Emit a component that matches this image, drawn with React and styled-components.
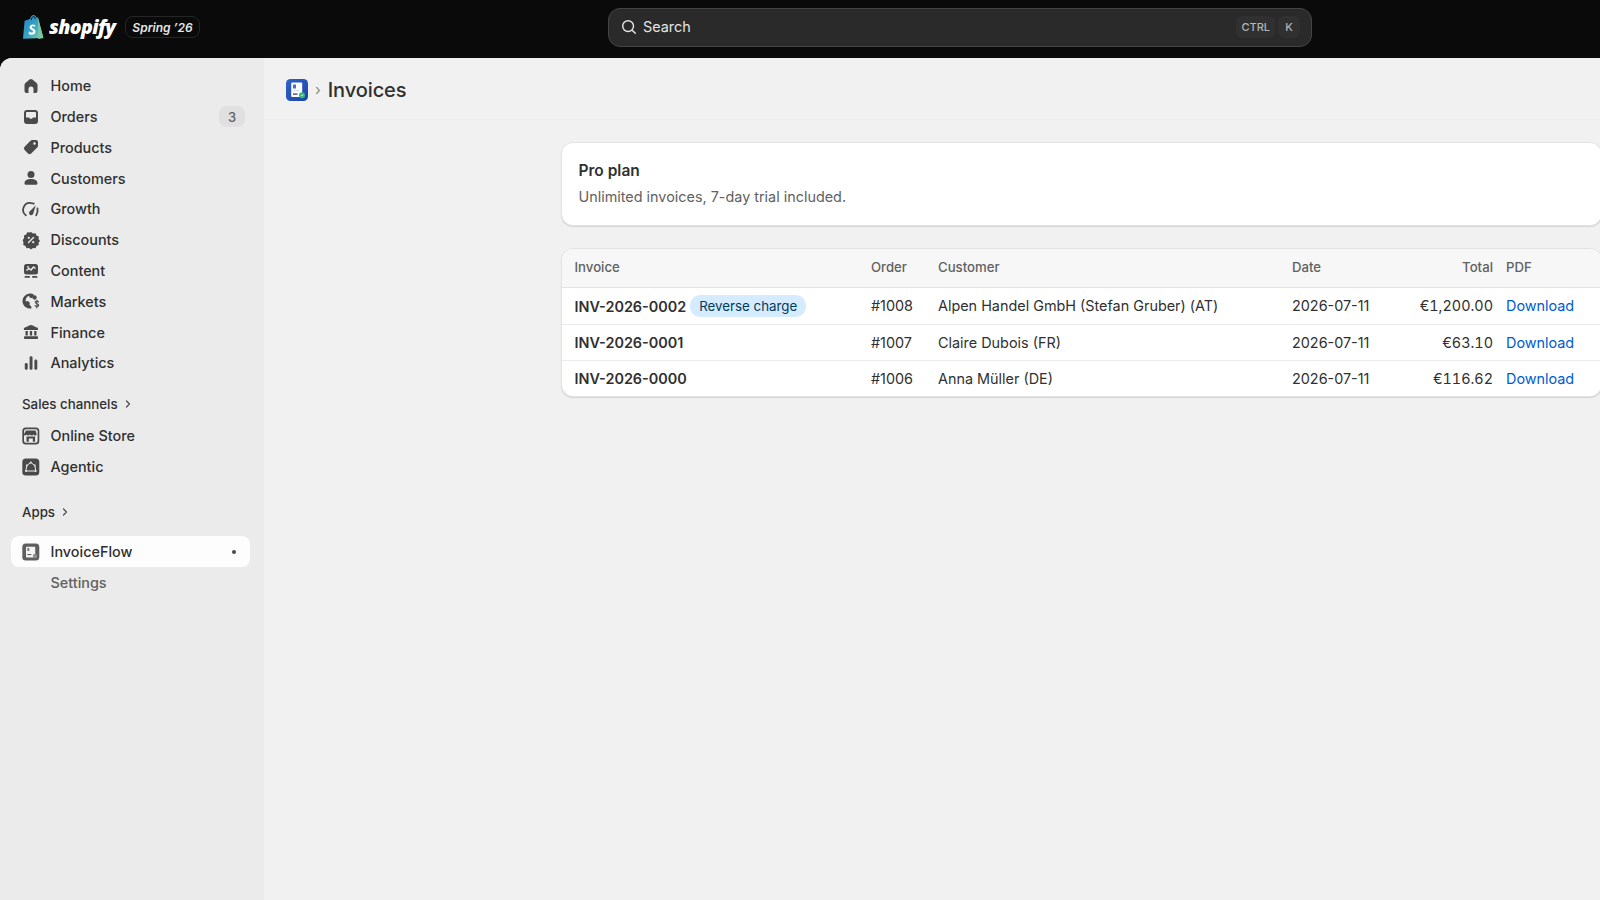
import React from "react";
import styled, { createGlobalStyle } from "styled-components";

const Global = createGlobalStyle`
  html, body {
    margin: 0;
    height: 100%;
    overflow: hidden;
    background: #0a0a0a;
  }
  * {
    box-sizing: border-box;
  }
  body {
    font-family: Inter, "Noto Sans", sans-serif;
    color: #303030;
  }
`;

const Page = styled.div`
  height: 100vh;
  display: flex;
  flex-direction: column;
  background: #0a0a0a;
`;

const TopBar = styled.header`
  height: 58px;
  flex: none;
  display: flex;
  align-items: center;
  padding: 0 0 4px 22px;
`;

const Brand = styled.div`
  width: 586px;
  display: flex;
  align-items: center;
`;

const Wordmark = styled.span`
  margin-left: 5px;
  color: #fff;
  font-family: "Open Sans", sans-serif;
  font-style: italic;
  font-weight: 800;
  font-size: 19.5px;
  letter-spacing: -0.6px;
  line-height: 26px;
`;

const Season = styled.span`
  margin-left: 10px;
  height: 22px;
  padding: 0 6px;
  display: inline-flex;
  align-items: center;
  border: 1px solid #262626;
  border-radius: 8px;
  color: #e6e6e6;
  font-size: 12px;
  font-style: italic;
  font-weight: 600;
`;

const SearchBox = styled.div`
  width: 704px;
  height: 39px;
  display: flex;
  align-items: center;
  padding: 0 11px 1px 11px;
  background: #2a2a2a;
  border: 1px solid #444;
  border-radius: 12px;
  color: #e3e3e3;
  font-size: 14.4px;
`;

const SearchLabel = styled.span`
  margin-left: 5px;
  flex: 1;
`;

const Key = styled.span`
  height: 22px;
  min-width: 22px;
  margin-left: 3px;
  padding: 0 5px;
  display: inline-flex;
  align-items: center;
  justify-content: center;
  background: #303030;
  border-radius: 6px;
  color: #b5b5b5;
  font-size: 11px;
  font-weight: 450;
`;

const Body = styled.div`
  flex: 1;
  min-height: 0;
  display: flex;
  background: #f1f1f1;
  border-top-left-radius: 12px;
  overflow: hidden;
`;

const Sidebar = styled.nav`
  width: 264px;
  flex: none;
  padding: 12.4px 14px 0 11px;
  background: #ebebeb;
`;

const NavItem = styled.div`
  height: 30.8px;
  padding: 0 5px 0 10px;
  display: flex;
  align-items: center;
  gap: 9.5px;
  border-radius: 8px;
  background: ${(p) => (p.$active ? "#fdfdfd" : "transparent")};
  color: ${(p) => (p.$muted ? "#616161" : "#303030")};
  font-size: 14.4px;
  font-weight: ${(p) => (p.$muted ? 450 : 500)};
  white-space: nowrap;
`;

const NavLabel = styled.span`
  flex: 1;
  padding-left: ${(p) => (p.$indent ? "29.5px" : "0")};
`;

const CountBadge = styled.span`
  width: 26px;
  height: 21px;
  display: flex;
  align-items: center;
  justify-content: center;
  background: #e0e0e0;
  border-radius: 8px;
  color: #616161;
  font-size: 13px;
`;

const ActiveDot = styled.span`
  width: 4px;
  height: 4px;
  margin-right: 9px;
  border-radius: 50%;
  background: #4a4a4a;
`;

const SectionLabel = styled.div`
  height: 20px;
  margin: ${(p) => p.$margin};
  padding-left: 11px;
  display: flex;
  align-items: center;
  gap: 5px;
  color: #303030;
  font-size: 13.3px;
  font-weight: 500;
`;

const Main = styled.main`
  flex: 1;
  min-width: 0;
  overflow: hidden;
`;

const PageHeader = styled.div`
  height: 62px;
  padding: 2px 0 0 22px;
  display: flex;
  align-items: center;
  border-bottom: 1px solid #ebebeb;
`;

const Crumb = styled.span`
  margin: 0 7px;
  color: #8a8a8a;
  font-size: 15px;
`;

const Title = styled.h1`
  margin: 0;
  color: #303030;
  font-size: 20px;
  font-weight: 550;
  letter-spacing: -0.1px;
`;

const Content = styled.div`
  padding: 22px 0 0 297px;
`;

const Card = styled.section`
  width: 1041px;
  height: 84px;
  padding: 18px 16.5px 0;
  background: #fff;
  border: 1px solid #e3e3e3;
  border-radius: 12px;
  box-shadow: 0 1px 1px rgba(0, 0, 0, 0.12);
`;

const CardTitle = styled.h2`
  margin: 0 0 6px;
  color: #303030;
  font-size: 15.5px;
  font-weight: 600;
  line-height: 20px;
`;

const CardText = styled.p`
  margin: 0;
  color: #616161;
  font-size: 14.4px;
  line-height: 20px;
`;

const TableCard = styled.div`
  width: 1041px;
  margin-top: 22px;
  background: #fff;
  border: 1px solid #e3e3e3;
  border-radius: 12px;
  box-shadow: 0 1px 1px rgba(0, 0, 0, 0.12);
  overflow: hidden;
`;

const Table = styled.table`
  width: 100%;
  table-layout: fixed;
  border-collapse: collapse;
  font-size: 14.4px;
`;

const HeadCell = styled.th`
  height: 38px;
  padding: 0 ${(p) => (p.$right ? "7px" : "6px")} 2px 6px;
  background: #f7f7f7;
  border-bottom: 1px solid #e3e3e3;
  color: #616161;
  font-size: 13.2px;
  font-weight: 500;
  text-align: ${(p) => (p.$right ? "right" : "left")};
  &:first-child {
    padding-left: 12.5px;
  }
`;

const Cell = styled.td`
  height: 36px;
  padding: 0 ${(p) => (p.$right ? "7px" : "6px")} 0 6px;
  color: #303030;
  white-space: nowrap;
  text-align: ${(p) => (p.$right ? "right" : "left")};
  font-variant-numeric: ${(p) => (p.$right ? "tabular-nums" : "normal")};
  &:first-child {
    padding-left: 12.5px;
  }
`;

const Row = styled.tr`
  &:first-child td {
    height: 37px;
  }
  & + & td {
    border-top: 1px solid #ebebeb;
  }
`;

const InvoiceNo = styled.strong`
  font-weight: 600;
  vertical-align: ${(p) => (p.$withPill ? "middle" : "baseline")};
`;

const Pill = styled.span`
  margin-left: 4px;
  height: 22px;
  padding: 0 9px;
  display: inline-flex;
  align-items: center;
  vertical-align: middle;
  background: #d5ebff;
  border-radius: 10px;
  color: #003a5a;
  font-size: 13.3px;
`;

const DownloadLink = styled.a`
  color: #005bd3;
  text-decoration: none;
`;

const Svg = styled.svg`
  display: block;
  flex: none;
`;

const Icon = ({ children, size = 20 }) => (
  <Svg width={size} height={size} viewBox="0 0 20 20" fill="#4a4a4a">
    {children}
  </Svg>
);

const Chevron = () => (
  <Svg width="10" height="10" viewBox="0 0 10 10" fill="none">
    <path d="M3.5 2l3 3-3 3" stroke="#4a4a4a" strokeWidth="1.2" strokeLinecap="round" strokeLinejoin="round" />
  </Svg>
);

const ShopifyBag = () => (
  <Svg width="22" height="26" viewBox="0 0 22 26">
    <defs>
      <linearGradient id="bag" x1="0" y1="0" x2="1" y2="1">
        <stop offset="0" stopColor="#2a7fb8" />
        <stop offset="0.55" stopColor="#37a6c8" />
        <stop offset="1" stopColor="#8fd0a8" />
      </linearGradient>
    </defs>
    <path d="M2.600 6.800L8 5c.5-2.400 2-4 3.600-4 1.400 0 2.400 1 2.800 2.600l1.400-.3L21.400 24 1 24.800z" fill="url(#bag)" />
    <path d="M16 3.200L21.400 24 16.400 25z" fill="#7cc6a0" />
    <path d="M9.400 6c.3-2 1-3.500 2.200-3.500.9 0 1.500.9 1.700 2.400" fill="none" stroke="#0a0a0a" strokeWidth="0.9" />
    <path d="M13.400 11.200c-.7-.5-1.700-.7-2.500-.7-1.900 0-3.300 1.100-3.300 2.800 0 2.700 3.600 2.600 3.600 4.200 0 .7-.6 1.100-1.400 1.100-1 0-2-.5-2.700-1l-.6 2.100c.8.6 2 1 3.200 1 2.300 0 3.800-1.300 3.800-3.300 0-2.900-3.600-2.900-3.600-4.200 0-.5.4-.9 1.200-.9.7 0 1.300.2 1.900.5z" fill="#fff" />
  </Svg>
);

const SearchIcon = () => (
  <Svg width="18" height="18" viewBox="0 0 20 20" fill="none">
    <circle cx="9" cy="9" r="6" stroke="#e3e3e3" strokeWidth="1.6" />
    <path d="M13.500 13.500L17 17" stroke="#e3e3e3" strokeWidth="1.6" strokeLinecap="round" />
  </Svg>
);

const HomeIcon = () => (
  <Icon>
    <path d="M8.600 3.500a2.200 2.200 0 0 1 2.800 0l4.200 3.400c.6.5.9 1.200.9 2V15a2 2 0 0 1-2 2h-2V13a2.500 2.500 0 0 0-5 0v4h-2a2 2 0 0 1-2-2V8.900c0-.8.3-1.500.9-2z" />
  </Icon>
);

const OrdersIcon = () => (
  <Icon>
    <path
      fillRule="evenodd"
      d="M6 3h8a3 3 0 0 1 3 3v8a3 3 0 0 1-3 3H6a3 3 0 0 1-3-3V6a3 3 0 0 1 3-3zM6 5a1 1 0 0 0-1 1V10.500h2.600c.4 0 .7.2.9.5l.5.8h2l.5-.8c.2-.3.5-.5.9-.5H15V6a1 1 0 0 0-1-1z"
    />
  </Icon>
);

const ProductsIcon = () => (
  <Icon>
    <path
      fillRule="evenodd"
      d="M11.300 3H15a2 2 0 0 1 2 2v3.700c0 .7-.3 1.300-.8 1.800l-6 5.900a2.300 2.300 0 0 1-3.200 0l-3.400-3.400a2.300 2.300 0 0 1 0-3.200l5.900-6c.5-.5 1.100-.8 1.800-.8zM13.500 5.200a1.300 1.300 0 1 0 0 2.600 1.300 1.300 0 0 0 0-2.600z"
    />
  </Icon>
);

const CustomersIcon = () => (
  <Icon>
    <circle cx="10" cy="6.500" r="3.500" />
    <path d="M3.500 15.200c0-2.800 2.900-4.200 6.500-4.200s6.500 1.400 6.500 4.200c0 1-.8 1.500-1.800 1.500H5.300c-1 0-1.800-.5-1.800-1.500z" />
  </Icon>
);

const GrowthIcon = () => (
  <Icon>
    <path d="M4.800 16.200A6.800 6.800 0 0 1 10.500 4.200c.8 0 1.500.1 2.200.4" fill="none" stroke="#4a4a4a" strokeWidth="1.800" strokeLinecap="round" />
    <path d="M16.500 9.500c.4 2.300 0 4.700-1.300 6.700" fill="none" stroke="#4a4a4a" strokeWidth="1.800" strokeLinecap="round" />
    <path d="M14.800 6.300l-2.400 7.600a2.200 2.200 0 1 1-3.600-1.600z" />
  </Icon>
);

const DiscountsIcon = () => (
  <Icon>
    <path d="M10 2l2 1.500 2.500-.3 1 2.300 2.300 1-.3 2.500 1.500 2-1.500 1.800.3 2.200-2.300 1-1 2.300-2.500-.3-2 1.500-2-1.500-2.500.3-1-2.300-2.300-1 .3-2.200L1.700 10l1.500-2-.3-2.500 2.300-1 1-2.300 2.500.3z" />
    <path d="M12.500 7.500l-5 5" stroke="#ebebeb" strokeWidth="1.500" strokeLinecap="round" />
    <circle cx="7.800" cy="7.800" r="1.100" fill="#ebebeb" />
    <circle cx="12.200" cy="12.200" r="1.100" fill="#ebebeb" />
  </Icon>
);

const ContentIcon = () => (
  <Icon>
    <rect x="3" y="3" width="14" height="10.500" rx="2.500" />
    <path d="M5.500 9.500l2.500-2 2 1.500 2.500-3 2 1.500" fill="none" stroke="#ebebeb" strokeWidth="1.500" />
    <circle cx="7" cy="6" r="0.900" fill="#ebebeb" />
    <rect x="3.500" y="15" width="5.500" height="1.800" rx="0.900" />
    <rect x="11" y="15" width="5.500" height="1.800" rx="0.900" />
  </Icon>
);

const MarketsIcon = () => (
  <Icon>
    <path d="M13 3.700A7.500 7.500 0 1 0 10.500 17.400l-.2-2-1.800-1.600.3-2.300-2.300-1.500-1.800.4A5.500 5.500 0 0 1 8 4.700l.7 1.800 2 .8z" />
    <path d="M11 4.500l3.500-.2 1.500 2.200-2 2.500-2.500-1.500z" />
    <path d="M17.500 10.800c-.4-.5-1-.8-1.700-.8-1 0-1.600.6-1.600 1.300 0 1.700 3.500 1 3.500 2.900 0 .8-.8 1.300-1.800 1.300-.8 0-1.500-.3-1.900-.9M15.900 9v8" fill="none" stroke="#4a4a4a" strokeWidth="1.100" strokeLinecap="round" />
  </Icon>
);

const FinanceIcon = () => (
  <Icon>
    <path d="M9.200 3.200a2 2 0 0 1 1.600 0l5.600 2.500c.4.2.6.5.6.9v1.400H2.900V6.600c0-.4.2-.7.6-.9z" />
    <rect x="4.500" y="9" width="2.300" height="4.500" />
    <rect x="8.850" y="9" width="2.300" height="4.500" />
    <rect x="13.200" y="9" width="2.300" height="4.500" />
    <rect x="3" y="14.300" width="14" height="2.700" rx="0.800" />
  </Icon>
);

const AnalyticsIcon = () => (
  <Icon>
    <rect x="3.800" y="10" width="2.900" height="6.800" rx="1.400" />
    <rect x="8.600" y="3.200" width="2.900" height="13.600" rx="1.400" />
    <rect x="13.400" y="6.500" width="2.900" height="10.300" rx="1.400" />
  </Icon>
);

const StoreIcon = () => (
  <Icon>
    <rect x="1.300" y="1.500" width="17" height="17" rx="3.500" />
    <rect x="3" y="3.200" width="13.600" height="13.600" rx="2" fill="#ebebeb" />
    <path d="M5 4.500h9.600l1 3.400c0 1-.8 1.500-1.500 1.500-.8 0-1.500-.5-1.700-1-.3.5-.8 1-1.600 1s-1.400-.5-1.800-1c-.4.500-1 1-1.700 1s-1.300-.5-1.700-1c-.3.500-.8 1-1.500 1s-1.100-.5-1.100-1.500z" />
    <path d="M5.500 10.500h8.600v5.300h-2.300v-3.300H7.800v3.300H5.500z" />
  </Icon>
);

const AgenticIcon = () => (
  <Icon>
    <rect x="1.300" y="1.500" width="17" height="17" rx="3.500" />
    <path d="M9.800 5.500l4 3 1 5.500H4.800l1-5.500z" fill="none" stroke="#ebebeb" strokeWidth="1" strokeLinejoin="round" />
    <circle cx="9.800" cy="5.500" r="1" fill="#ebebeb" />
    <circle cx="5" cy="14" r="1" fill="#ebebeb" />
    <circle cx="14.600" cy="14" r="1" fill="#ebebeb" />
    <circle cx="5.800" cy="8.500" r="0.900" fill="#ebebeb" />
    <circle cx="13.800" cy="8.500" r="0.900" fill="#ebebeb" />
  </Icon>
);

const InvoiceFlowIcon = () => (
  <Icon>
    <rect x="1.300" y="1.500" width="17" height="17" rx="3.500" fill="#5f5f5f" />
    <path d="M5.800 4.800h7.600a.8.800 0 0 1 .8.800V15a.6.600 0 0 1-.6.600H5.800a.8.800 0 0 1-.8-.8V5.600c0-.4.400-.8.800-.8z" fill="#f4f4f4" />
    <rect x="6.300" y="6" width="2" height="3" fill="#7b7b7b" />
    <rect x="6.300" y="12" width="4" height="1.100" fill="#5f5f5f" />
    <circle cx="14" cy="14" r="2.200" fill="#8e8e8e" />
  </Icon>
);

const AppTile = () => (
  <Svg width="22" height="22" viewBox="0 0 22 22">
    <defs>
      <linearGradient id="tile" x1="0" y1="0" x2="1" y2="1">
        <stop offset="0" stopColor="#2f63c9" />
        <stop offset="1" stopColor="#1d45a3" />
      </linearGradient>
    </defs>
    <rect width="22" height="22" rx="4.500" fill="url(#tile)" />
    <path d="M6.200 3.500h9a1 1 0 0 1 1 1V17a.9.900 0 0 1-.9.900H6.200a1 1 0 0 1-1-1V4.500a1 1 0 0 1 1-1z" fill="#fff" />
    <rect x="7" y="5.500" width="3" height="4" rx="0.500" fill="#3d76d6" />
    <rect x="7" y="11" width="6" height="0.800" fill="#c8d6ee" />
    <rect x="7" y="14.500" width="4.500" height="1.200" fill="#24365c" />
    <circle cx="16" cy="16.200" r="3" fill="#2fb67c" />
    <path d="M14.800 16.200l.9.900 1.500-1.600" fill="none" stroke="#fff" strokeWidth="0.800" />
  </Svg>
);

const mainNav = [
  ["Home", HomeIcon],
  ["Orders", OrdersIcon, "3"],
  ["Products", ProductsIcon],
  ["Customers", CustomersIcon],
  ["Growth", GrowthIcon],
  ["Discounts", DiscountsIcon],
  ["Content", ContentIcon],
  ["Markets", MarketsIcon],
  ["Finance", FinanceIcon],
  ["Analytics", AnalyticsIcon],
];

const invoices = [
  ["INV-2026-0002", true, "#1008", "Alpen Handel GmbH (Stefan Gruber) (AT)", "€1,200.00"],
  ["INV-2026-0001", false, "#1007", "Claire Dubois (FR)", "€63.10"],
  ["INV-2026-0000", false, "#1006", "Anna Müller (DE)", "€116.62"],
];

export default function App() {
  return (
    <Page>
      <Global />
      <TopBar>
        <Brand>
          <ShopifyBag />
          <Wordmark>shopify</Wordmark>
          <Season>Spring ’26</Season>
        </Brand>
        <SearchBox>
          <SearchIcon />
          <SearchLabel>Search</SearchLabel>
          <Key>CTRL</Key>
          <Key>K</Key>
        </SearchBox>
      </TopBar>
      <Body>
        <Sidebar>
          {mainNav.map(([label, NavIcon, count]) => (
            <NavItem key={label}>
              <NavIcon />
              <NavLabel>{label}</NavLabel>
              {count && <CountBadge>{count}</CountBadge>}
            </NavItem>
          ))}
          <SectionLabel $margin="16px 0 6px">
            Sales channels <Chevron />
          </SectionLabel>
          <NavItem>
            <StoreIcon />
            <NavLabel>Online Store</NavLabel>
          </NavItem>
          <NavItem>
            <AgenticIcon />
            <NavLabel>Agentic</NavLabel>
          </NavItem>
          <SectionLabel $margin="20px 0 14.5px">
            Apps <Chevron />
          </SectionLabel>
          <NavItem $active>
            <InvoiceFlowIcon />
            <NavLabel>InvoiceFlow</NavLabel>
            <ActiveDot />
          </NavItem>
          <NavItem $muted>
            <NavLabel $indent>Settings</NavLabel>
          </NavItem>
        </Sidebar>
        <Main>
          <PageHeader>
            <AppTile />
            <Crumb>›</Crumb>
            <Title>Invoices</Title>
          </PageHeader>
          <Content>
            <Card>
              <CardTitle>Pro plan</CardTitle>
              <CardText>Unlimited invoices, 7-day trial included.</CardText>
            </Card>
            <TableCard>
              <Table>
                <colgroup>
                  <col width="303" />
                  <col width="67" />
                  <col width="354" />
                  <col width="99" />
                  <col width="115" />
                  <col width="101" />
                </colgroup>
                <thead>
                  <tr>
                    <HeadCell>Invoice</HeadCell>
                    <HeadCell>Order</HeadCell>
                    <HeadCell>Customer</HeadCell>
                    <HeadCell>Date</HeadCell>
                    <HeadCell $right>Total</HeadCell>
                    <HeadCell>PDF</HeadCell>
                  </tr>
                </thead>
                <tbody>
                  {invoices.map(([no, reverse, order, customer, total]) => (
                    <Row key={no}>
                      <Cell>
                        <InvoiceNo $withPill={reverse}>{no}</InvoiceNo>
                        {reverse && <Pill>Reverse charge</Pill>}
                      </Cell>
                      <Cell>{order}</Cell>
                      <Cell>{customer}</Cell>
                      <Cell>2026-07-11</Cell>
                      <Cell $right>{total}</Cell>
                      <Cell>
                        <DownloadLink href="#">Download</DownloadLink>
                      </Cell>
                    </Row>
                  ))}
                </tbody>
              </Table>
            </TableCard>
          </Content>
        </Main>
      </Body>
    </Page>
  );
}
